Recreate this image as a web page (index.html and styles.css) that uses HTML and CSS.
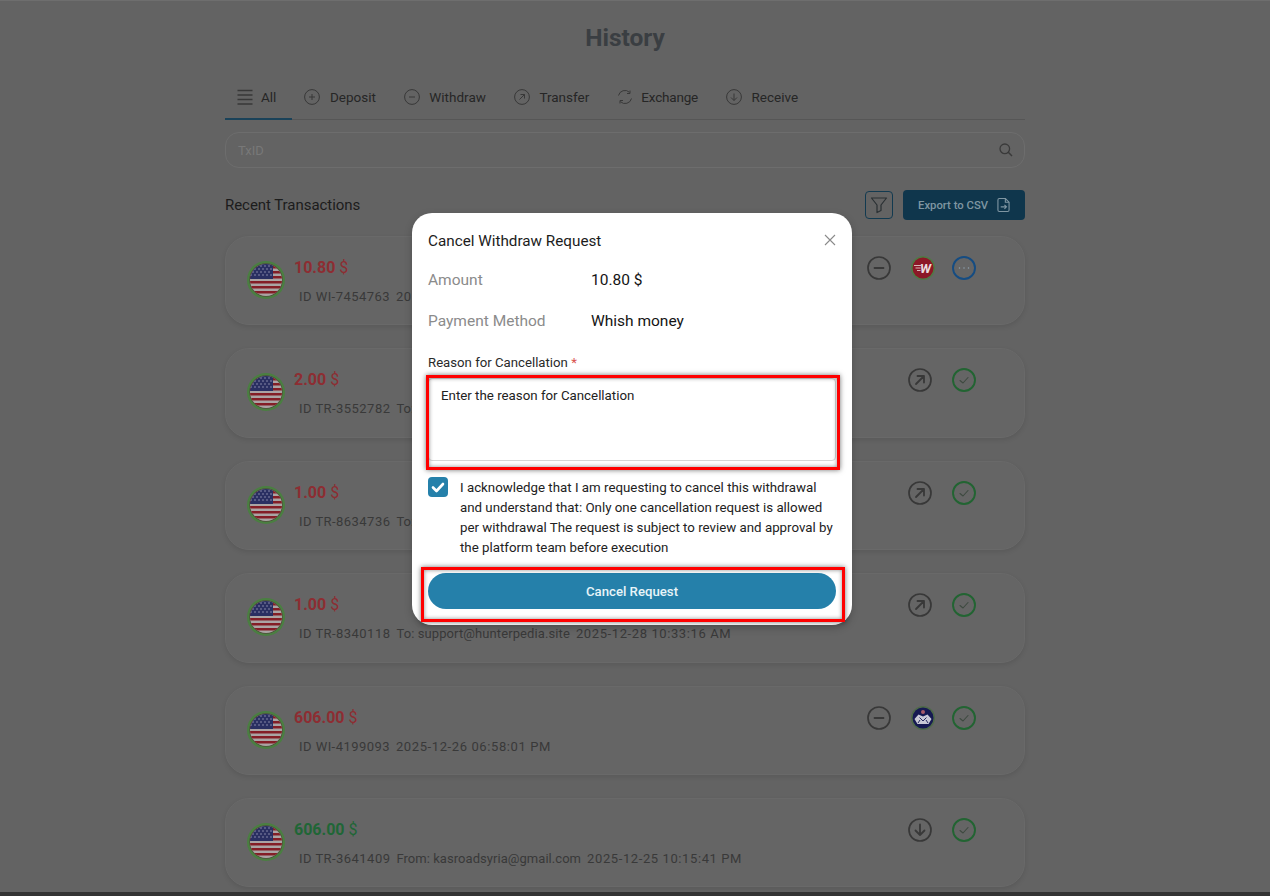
FILE: index.html
```html
<!DOCTYPE html>
<html lang="en">
<head>
<meta charset="utf-8">
<title>History</title>
<link rel="stylesheet" href="styles.css">
</head>
<body>
<svg class="defs" width="0" height="0" aria-hidden="true">
  <defs>
    <clipPath id="flag-clip"><circle cx="19" cy="19" r="16"/></clipPath>
    <symbol id="flag" viewBox="0 0 38 38">
      <circle cx="19" cy="19" r="19" fill="#4a7f41"/>
      <circle cx="19" cy="19" r="16.700" fill="#4d4d3a"/>
      <g clip-path="url(#flag-clip)">
        <rect x="0" y="0" width="38" height="38" fill="#aaa4a4"/>
        <rect x="0" y="5" width="38" height="2.500" fill="#841e26"/>
        <rect x="0" y="10" width="38" height="2.500" fill="#841e26"/>
        <rect x="0" y="15" width="38" height="2.500" fill="#841e26"/>
        <rect x="0" y="20" width="38" height="2.500" fill="#841e26"/>
        <rect x="0" y="25" width="38" height="2.500" fill="#841e26"/>
        <rect x="0" y="30" width="38" height="2.500" fill="#841e26"/>
        <rect x="0" y="0" width="26" height="18" fill="#2a2f62"/>
        <g fill="#9292b0">
          <circle cx="10" cy="5" r=".8"/><circle cx="14" cy="5" r=".8"/><circle cx="18" cy="5" r=".8"/><circle cx="22" cy="5" r=".8"/>
          <circle cx="8" cy="8" r=".8"/><circle cx="12" cy="8" r=".8"/><circle cx="16" cy="8" r=".8"/><circle cx="20" cy="8" r=".8"/><circle cx="24" cy="8" r=".8"/>
          <circle cx="6" cy="11" r=".8"/><circle cx="10" cy="11" r=".8"/><circle cx="14" cy="11" r=".8"/><circle cx="18" cy="11" r=".8"/><circle cx="22" cy="11" r=".8"/>
          <circle cx="4" cy="14" r=".8"/><circle cx="8" cy="14" r=".8"/><circle cx="12" cy="14" r=".8"/><circle cx="16" cy="14" r=".8"/><circle cx="20" cy="14" r=".8"/><circle cx="24" cy="14" r=".8"/>
        </g>
      </g>
    </symbol>
    <symbol id="ring-minus" viewBox="0 0 24 24"><circle cx="12" cy="12" r="11" fill="none" stroke="currentColor" stroke-width="1.700"/><path d="M7.500 12h9" fill="none" stroke="currentColor" stroke-width="1.800" stroke-linecap="round"/></symbol>
    <symbol id="ring-arrow" viewBox="0 0 24 24"><circle cx="12" cy="12" r="11" fill="none" stroke="currentColor" stroke-width="1.700"/><path d="M8 16L16 8M9.500 8H16v6.500" fill="none" stroke="currentColor" stroke-width="1.800" stroke-linecap="round" stroke-linejoin="round"/></symbol>
    <symbol id="ring-down" viewBox="0 0 24 24"><circle cx="12" cy="12" r="11" fill="none" stroke="currentColor" stroke-width="1.700"/><path d="M12 6.500V17M7.500 12.500L12 17l4.500-4.500" fill="none" stroke="currentColor" stroke-width="1.800" stroke-linecap="round" stroke-linejoin="round"/></symbol>
    <symbol id="ring-check" viewBox="0 0 24 24"><circle cx="12" cy="12" r="11" fill="none" stroke="currentColor" stroke-width="1.900"/><path d="M8 12.500l3 2.500 5-5.500" fill="none" stroke="#3e4a40" stroke-width="1.100" stroke-linecap="round" stroke-linejoin="round"/></symbol>
    <symbol id="ring-more" viewBox="0 0 24 24"><circle cx="12" cy="12" r="11" fill="none" stroke="currentColor" stroke-width="1.900"/><path d="M7.500 12h.01M12 12h.01M16.500 12h.01" fill="none" stroke="#8ea0ae" stroke-width="1.500" stroke-linecap="round"/></symbol>
    <symbol id="tab-plus" viewBox="0 0 16 16"><circle cx="8" cy="8" r="7.400" fill="none" stroke="currentColor"/><path d="M8 5v6M5 8h6" fill="none" stroke="currentColor"/></symbol>
    <symbol id="tab-minus" viewBox="0 0 16 16"><circle cx="8" cy="8" r="7.400" fill="none" stroke="currentColor"/><path d="M5 8h6" fill="none" stroke="currentColor"/></symbol>
    <symbol id="tab-arrow" viewBox="0 0 16 16"><circle cx="8" cy="8" r="7.400" fill="none" stroke="currentColor"/><path d="M5.500 10.500l5-5M6.500 5.500h4v4" fill="none" stroke="currentColor"/></symbol>
    <symbol id="tab-down" viewBox="0 0 16 16"><circle cx="8" cy="8" r="7.400" fill="none" stroke="currentColor"/><path d="M8 4.500v7M5 8.500l3 3 3-3" fill="none" stroke="currentColor"/></symbol>
    <symbol id="tab-swap" viewBox="0 0 16 16"><path d="M1.500 6.500A6.600 6.600 0 0 1 12.500 3.300M14.500 9.500A6.600 6.600 0 0 1 3.500 12.700" fill="none" stroke="currentColor"/><path d="M13 1.500v3h-3M3 14.500v-3h3" fill="none" stroke="currentColor"/></symbol>
    <symbol id="logo-wise" viewBox="0 0 24 24">
      <circle cx="12" cy="12" r="12" fill="#4f7a45"/><circle cx="12" cy="12" r="10.500" fill="#8c1826"/>
      <path d="M3 9.500h7M4.500 12h5M6 14.500h3.500" stroke="#d9b7b7" stroke-width="1.100"/>
      <text x="14.500" y="17" text-anchor="middle" class="wise-letter">W</text>
    </symbol>
    <symbol id="logo-hands" viewBox="0 0 24 24">
      <circle cx="12" cy="12" r="12" fill="#4f6a4a"/><circle cx="12" cy="12" r="10.500" fill="#161a52"/>
      <circle cx="12" cy="6" r="2" fill="#a85a6a"/>
      <path d="M3.500 13l4-4.500 4.500 2 4.500-2 4 4.500-3 5H6.500z" fill="#c9c9d6"/>
      <path d="M8.500 11.500l3.500 3.500 3.500-3.500M7 17l2-3M17 17l-2-3" fill="none" stroke="#161a52" stroke-width=".9"/>
    </symbol>
  </defs>
</svg>

<main class="page">
  <h1 class="title">History</h1>

  <nav class="tabs">
    <a class="tab tab-active">
      <svg class="tab-icon" viewBox="0 0 16 16"><path d="M0.500 1.500h15M0.500 6h15M0.500 10.500h15M0.500 15h15" fill="none" stroke="currentColor" stroke-width="1.300"/></svg>
      <span>All</span>
    </a>
    <a class="tab"><svg class="tab-icon"><use href="#tab-plus"/></svg><span>Deposit</span></a>
    <a class="tab"><svg class="tab-icon"><use href="#tab-minus"/></svg><span>Withdraw</span></a>
    <a class="tab"><svg class="tab-icon"><use href="#tab-arrow"/></svg><span>Transfer</span></a>
    <a class="tab tab-narrow"><svg class="tab-icon"><use href="#tab-swap"/></svg><span>Exchange</span></a>
    <a class="tab"><svg class="tab-icon"><use href="#tab-down"/></svg><span>Receive</span></a>
  </nav>

  <div class="search">
    <span class="search-text">TxID</span>
    <svg class="search-icon" viewBox="0 0 14 14"><circle cx="5.800" cy="5.800" r="4.800" fill="none" stroke="currentColor" stroke-width="1.300"/><path d="M9.300 9.300L13 13" fill="none" stroke="currentColor" stroke-width="1.500"/></svg>
  </div>

  <div class="list-head">
    <h2 class="list-title">Recent Transactions</h2>
    <button class="filter-btn">
      <svg viewBox="0 0 18 18" class="filter-icon"><path d="M1.500 2h15L11 9v5.500L7 16.500V9z" fill="none" stroke="currentColor" stroke-width="1.200" stroke-linejoin="round"/></svg>
    </button>
    <button class="export-btn">
      <span>Export to CSV</span>
      <svg viewBox="0 0 14 16" class="export-icon"><path d="M1 2.500A1.500 1.500 0 0 1 2.500 1H9l4 4v8.500a1.500 1.500 0 0 1-1.500 1.500h-9A1.500 1.500 0 0 1 1 13.500z" fill="none" stroke="currentColor" stroke-width="1.200"/><path d="M9 1v4h4M4 10h6M8 7.800L10.200 10 8 12.200" fill="none" stroke="currentColor" stroke-width="1.200"/></svg>
    </button>
  </div>

  <section class="cards">
    <article class="card">
      <svg class="flag"><use href="#flag"/></svg>
      <div class="card-body">
        <div class="amount amount-out">10.80 <span class="currency">$</span></div>
        <div class="meta"><span class="meta-id">ID WI-7454763</span><span class="meta-date">20</span></div>
      </div>
      <div class="actions">
        <svg class="ring ring-dark"><use href="#ring-minus"/></svg>
        <svg class="ring logo-tight"><use href="#logo-wise"/></svg>
        <svg class="ring ring-blue"><use href="#ring-more"/></svg>
      </div>
    </article>
    <article class="card">
      <svg class="flag"><use href="#flag"/></svg>
      <div class="card-body">
        <div class="amount amount-out">2.00 <span class="currency">$</span></div>
        <div class="meta"><span class="meta-id">ID TR-3552782</span><span>To:</span></div>
      </div>
      <div class="actions">
        <svg class="ring ring-dark"><use href="#ring-arrow"/></svg>
        <svg class="ring ring-green"><use href="#ring-check"/></svg>
      </div>
    </article>
    <article class="card">
      <svg class="flag"><use href="#flag"/></svg>
      <div class="card-body">
        <div class="amount amount-out">1.00 <span class="currency">$</span></div>
        <div class="meta"><span class="meta-id">ID TR-8634736</span><span>To:</span></div>
      </div>
      <div class="actions">
        <svg class="ring ring-dark"><use href="#ring-arrow"/></svg>
        <svg class="ring ring-green"><use href="#ring-check"/></svg>
      </div>
    </article>
    <article class="card">
      <svg class="flag"><use href="#flag"/></svg>
      <div class="card-body">
        <div class="amount amount-out">1.00 <span class="currency">$</span></div>
        <div class="meta"><span class="meta-id">ID TR-8340118</span><span class="meta-to">To: support@hunterpedia.site</span><span class="meta-date">2025-12-28 10:33:16 AM</span></div>
      </div>
      <div class="actions">
        <svg class="ring ring-dark"><use href="#ring-arrow"/></svg>
        <svg class="ring ring-green"><use href="#ring-check"/></svg>
      </div>
    </article>
    <article class="card">
      <svg class="flag"><use href="#flag"/></svg>
      <div class="card-body">
        <div class="amount amount-out">606.00 <span class="currency">$</span></div>
        <div class="meta"><span class="meta-id">ID WI-4199093</span><span class="meta-date">2025-12-26 06:58:01 PM</span></div>
      </div>
      <div class="actions">
        <svg class="ring ring-dark"><use href="#ring-minus"/></svg>
        <svg class="ring logo-tight"><use href="#logo-hands"/></svg>
        <svg class="ring ring-green"><use href="#ring-check"/></svg>
      </div>
    </article>
    <article class="card">
      <svg class="flag"><use href="#flag"/></svg>
      <div class="card-body">
        <div class="amount amount-in">606.00 <span class="currency">$</span></div>
        <div class="meta"><span class="meta-id">ID TR-3641409</span><span class="meta-from">From: kasroadsyria@gmail.com</span><span class="meta-date">2025-12-25 10:15:41 PM</span></div>
      </div>
      <div class="actions">
        <svg class="ring ring-dark"><use href="#ring-down"/></svg>
        <svg class="ring ring-green"><use href="#ring-check"/></svg>
      </div>
    </article>
  </section>
</main>

<div class="footer-strip"></div>

<div class="modal" role="dialog">
  <div class="modal-head">
    <h3 class="modal-title">Cancel Withdraw Request</h3>
    <svg class="close" viewBox="0 0 12 12"><path d="M1 1l10 10M11 1L1 11" fill="none" stroke="currentColor" stroke-width="1.100"/></svg>
  </div>
  <div class="info-row"><span class="info-label">Amount</span><span class="info-value">10.80 $</span></div>
  <div class="info-row info-row-2"><span class="info-label">Payment Method</span><span class="info-value">Whish money</span></div>
  <div class="field-label">Reason for Cancellation <span class="req">*</span></div>
  <div class="textarea">Enter the reason for Cancellation</div>
  <div class="ack">
    <span class="checkbox"><svg viewBox="0 0 20 20"><path d="M5 10.500l3.500 3.500 6.500-7" fill="none" stroke="#fff" stroke-width="2.600" stroke-linecap="round" stroke-linejoin="round"/></svg></span>
    <p class="ack-text">I acknowledge that I am requesting to cancel this withdrawal and understand that: Only one cancellation request is allowed per withdrawal The request is subject to review and approval by the platform team before execution</p>
  </div>
  <button class="submit">Cancel Request</button>
  <div class="mark mark-field"></div>
  <div class="mark mark-button"></div>
</div>
</body>
</html>
```
FILE: styles.css
```css
* { box-sizing: border-box; }
html, body { margin: 0; height: 896px; overflow: hidden; }
body {
  background: #636363;
  font-family: "Roboto", "Liberation Sans", sans-serif;
  color: #2c2c2c;
  position: relative;
  border-top: 1px solid #6e6e6e;
}
.defs { position: absolute; }
.wise-letter { font: italic 700 13px "Roboto", sans-serif; fill: #eadede; }

.page { width: 800px; margin-left: 225px; }
.title {
  margin: 0; padding-top: 21px; height: 78px;
  text-align: center; font-size: 24.500px; line-height: 32px; font-weight: 700; color: #3a3e42;
}
.tabs { display: flex; gap: 4px; height: 41px; border-bottom: 1px solid #565656; }
.tab {
  display: flex; align-items: center; gap: 9.500px; padding: 0 12px 6px; height: 41px;
  font-size: 13.500px; color: #262626;
}
.tab-active { gap: 8px; padding: 0 16px 4px 12px; margin-right: -4px; border-bottom: 2px solid #1a4259; }
.tab-narrow { gap: 8px; letter-spacing: -0.200px; }
.tab-icon { width: 16px; height: 16px; color: #383838; flex: none; }

.search {
  display: flex; align-items: center; justify-content: space-between;
  height: 36px; margin-top: 12px; padding: 0 11px 0 12px;
  border: 1px solid #6d6d6d; border-radius: 14px;
}
.search-text { font-size: 13px; color: #787878; }
.search-icon { width: 14px; height: 14px; color: #3a3a3a; }

.list-head { display: flex; align-items: center; height: 30px; margin-top: 22px; }
.list-title { margin: 0 auto 0 0; font-size: 15px; letter-spacing: -0.050px; line-height: 30px; font-weight: 400; color: #1c1c1c; }
.filter-btn {
  width: 28px; height: 28px; margin-right: 10px; padding: 0; display: flex; align-items: center; justify-content: center;
  background: none; border: 1px solid #123a50; border-radius: 4px; color: #2a3033;
}
.filter-icon { width: 18px; height: 18px; }
.export-btn {
  display: flex; align-items: center; justify-content: flex-start; gap: 9px;
  width: 122px; height: 30px; padding: 0 0 0 15px; border: 0; border-radius: 4px;
  background: #0f364c; color: #7f96a2; font: 500 11.300px "Roboto", sans-serif;
}
.export-icon { width: 13px; height: 16px; }

.cards { display: flex; flex-direction: column; gap: 23px; margin-top: 16px; }
.card {
  display: flex; height: 89.400px; padding: 19px 48px 0 21px;
  border: 1px solid #696969; border-radius: 24px;
  background: #656565; box-shadow: 0 2px 5px rgba(0,0,0,.1);
}
.flag { width: 38px; height: 38px; flex: none; margin-top: 5px; }
.card-body { flex: 1; margin-left: 9px; min-width: 0; }
.amount { font-size: 16px; line-height: 22px; font-weight: 700; margin-top: 1px; }
.amount-out { color: #8d2d32; }
.amount-in { color: #1f6636; }
.currency { font-weight: 400; }
.meta { display: flex; gap: 6px; margin: 9px 0 0 5px; font-size: 13px; line-height: 18px; color: #393939; }
.meta-id { letter-spacing: .45px; }
.meta-date { letter-spacing: .6px; }
.meta-to { letter-spacing: .1px; }
.meta-from { letter-spacing: .05px; }
.actions { display: flex; gap: 20px; }
.ring { width: 24px; height: 24px; }
.ring-dark { color: #383838; }
.ring-green { color: #226432; }
.ring-blue { color: #154c82; }
.logo-tight { margin-right: -3px; }

.footer-strip { position: absolute; left: 0; right: 0; bottom: 0; height: 4px; background: #333333; }

.modal {
  position: absolute; left: 412px; top: 212px; width: 440px; height: 412px;
  padding: 0 16px; background: #fff; border-radius: 20px;
  box-shadow: 0 3px 8px rgba(0,0,0,.2);
}
.modal-head { display: flex; align-items: center; justify-content: space-between; height: 55px; }
.modal-title { margin: 0; font-size: 15.250px; font-weight: 400; color: #1c1c1c; }
.close { width: 12px; height: 12px; margin-top: -1px; color: #8a8a8a; }
.info-row { display: flex; align-items: center; height: 24px; }
.info-row-2 { margin-top: 17px; }
.info-label { width: 163px; font-size: 15.500px; color: #8b8b8b; }
.info-value { font-size: 15.500px; color: #141414; }
.field-label { margin-top: 20px; font-size: 13.200px; line-height: 20px; color: #2a2a2a; }
.req { color: #d9534f; }
.textarea {
  height: 83px; margin-top: 5px; padding: 7px 12px;
  border: 1px solid #d6d6d6; border-radius: 4px;
  font-size: 13.300px; line-height: 20px; color: #222;
}
.ack { display: flex; gap: 12px; margin-top: 16px; }
.checkbox { flex: none; width: 20px; height: 20px; border-radius: 4px; background: #2580aa; }
.checkbox svg { display: block; width: 20px; height: 20px; }
.ack-text { margin: 1px 0 -1px; font-size: 13.300px; line-height: 20px; color: #222; }
.submit {
  display: block; width: 100%; height: 36px; margin-top: 16px; padding: 0;
  border: 0; border-radius: 18px; background: #2580aa; color: #e8f4f8;
  font: 500 13.200px "Roboto", sans-serif;
}
.mark { position: absolute; border: 3px solid #f00; box-shadow: 0 0 5px rgba(0,0,0,.55), inset 0 0 4px rgba(0,0,0,.45); pointer-events: none; }
.mark-field { left: 14px; top: 162px; width: 414px; height: 95px; }
.mark-button { left: 9px; top: 354px; width: 424px; height: 55px; }
```
